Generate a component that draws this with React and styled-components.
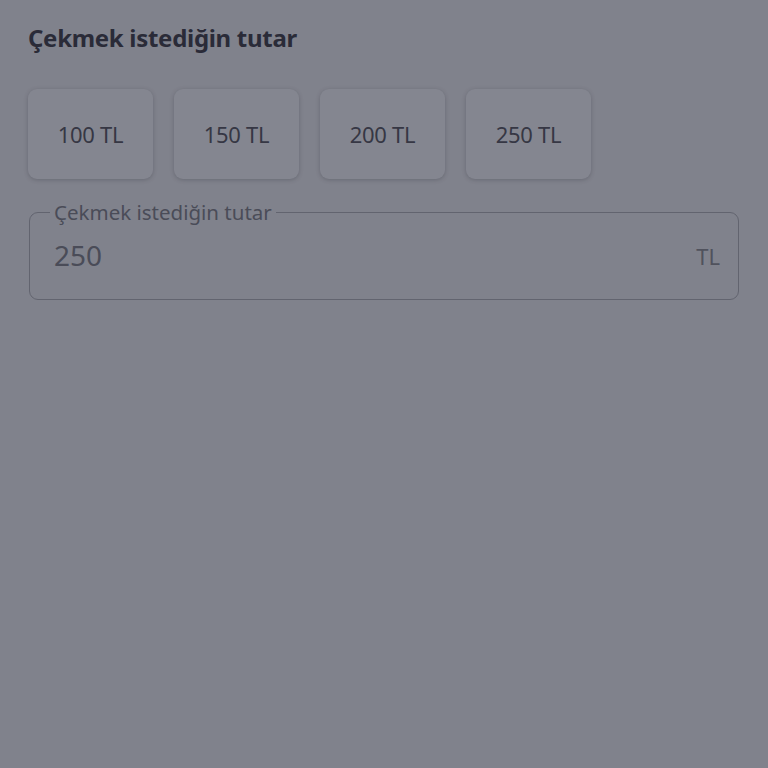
import styled, { createGlobalStyle } from 'styled-components';

const Global = createGlobalStyle`
html, body {
  margin: 0;
  padding: 0;
  background: #80828c;
}
body {
  font-family: "Noto Sans", "Open Sans", sans-serif;
}
`;

const Page = styled.div`
min-height: 768px;
background: #80828c;
padding: 20px 28px 0 28px;
box-sizing: border-box;
`;

const Title = styled.h3`
margin: 0;
font-size: 24px;
font-weight: 700;
color: #2a2b38;
letter-spacing: -0.3px;
line-height: 36px;
`;

const Amounts = styled.div`
display: flex;
gap: 21px;
margin-top: 33px;
`;

const AmountButton = styled.button`
width: 125px;
height: 90px;
border: none;
border-radius: 9px;
background: #848690;
box-shadow: 0 1px 4px rgba(40, 42, 55, 0.28);
font-family: "Noto Sans", sans-serif;
font-size: 22px;
letter-spacing: -0.3px;
color: #363744;
cursor: pointer;
padding: 0;
`;

const Field = styled.fieldset`
margin: 22px 1px 0 1px;
border: 1.5px solid #62646f;
border-radius: 9px;
padding: 0 18px 0 24px;
height: 99px;
box-sizing: border-box;
display: flex;
align-items: center;
justify-content: space-between;
`;

const Legend = styled.legend`
font-size: 20.5px;
color: #4a4c58;
padding: 0 4px;
margin-left: -4px;
line-height: 22px;
`;

const Value = styled.span`
font-size: 28px;
color: #4a4c58;
margin-top: -12px;
`;

const Unit = styled.span`
font-size: 22px;
color: #50525d;
margin-top: -10px;
`;

const amounts = [100, 150, 200, 250];

export default function App() {
  return <Page>
    <Global />
    <Title>Çekmek istediğin tutar</Title>
    <Amounts>
      {amounts.map(a => <AmountButton key={a}>{a} TL</AmountButton>)}
    </Amounts>
    <Field>
      <Legend>Çekmek istediğin tutar</Legend>
      <Value>250</Value>
      <Unit>TL</Unit>
    </Field>
  </Page>
}
